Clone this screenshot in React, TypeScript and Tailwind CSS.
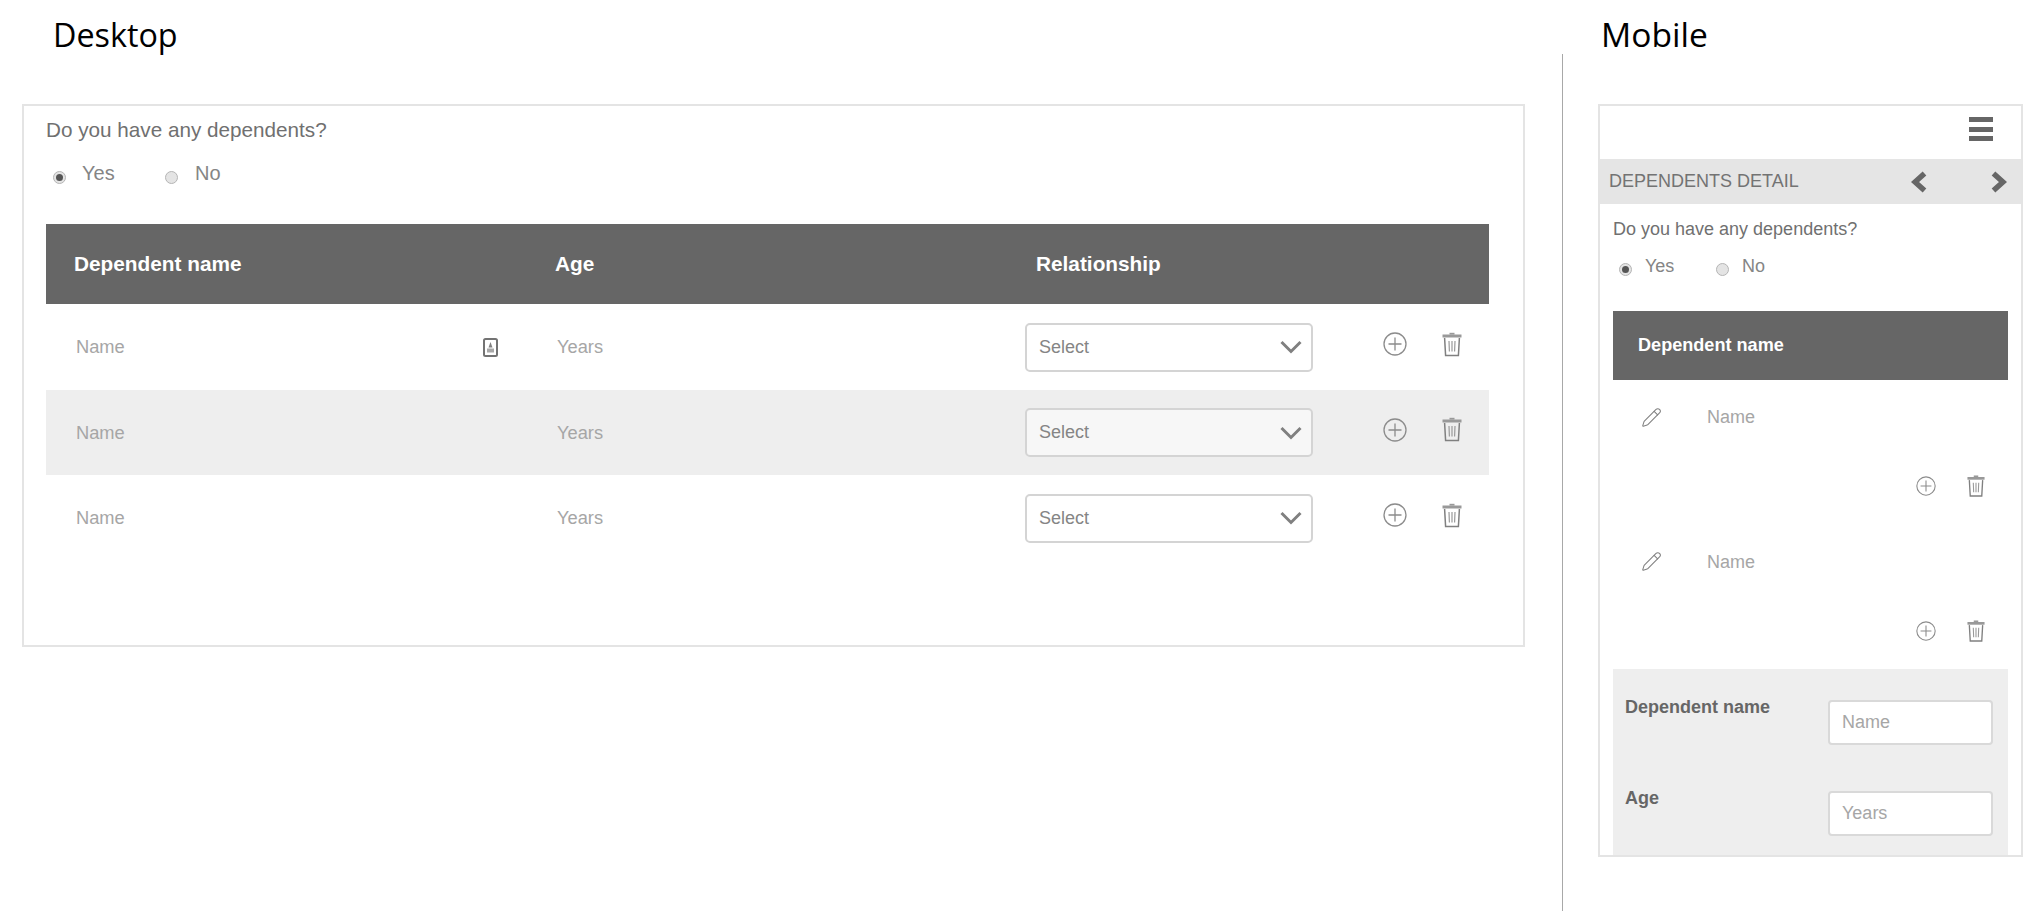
import { Pencil } from 'lucide-react'

const sans = "font-['Liberation_Sans',Arial,sans-serif]"

function PlusCircle({ size }: { size: number }) {
  return (
    <svg width={size} height={size} viewBox="0 0 24 24" fill="none" stroke="#8c8c8c" strokeWidth="1.3" className="shrink-0">
      <circle cx="12" cy="12" r="11" />
      <path d="M12 5.5v13M5.5 12h13" />
    </svg>
  )
}

function Trash({ width, height }: { width: number; height: number }) {
  return (
    <svg width={width} height={height} viewBox="0 0 20 24" fill="none" stroke="#808080" className="shrink-0">
      <path d="M0.5 3.5h19" strokeWidth="3" stroke="#999999" />
      <path d="M7.5 1.2h5" strokeWidth="1.8" stroke="#999999" />
      <path d="M2.6 5.5l1 17.6h12.8l1-17.6" strokeWidth="1.5" />
      <path d="M7 8.5l.4 10.5M10 8.5V19M13 8.5L12.6 19" strokeWidth="1.2" stroke="#999999" />
    </svg>
  )
}

function Chevron({ dir }: { dir: 'left' | 'right' }) {
  return (
    <svg width="16" height="22" viewBox="0 0 16 22" fill="none" stroke="#666666" strokeWidth="5.5">
      <path d={dir === 'left' ? 'M13.5 2.5L4 11l9.5 8.5' : 'M2.5 2.5L12 11l-9.5 8.5'} />
    </svg>
  )
}

function ContactIcon() {
  return (
    <svg width="15" height="19" viewBox="0 0 15 19" fill="none" className="shrink-0">
      <rect x="1" y="1" width="13" height="17" rx="1.5" stroke="#737373" strokeWidth="2" />
      <path d="M7.5 4l2 5.5h-4z" fill="#808080" />
      <rect x="4" y="10.5" width="7" height="4" fill="#a8a8a8" />
    </svg>
  )
}

function Radio({ checked }: { checked?: boolean }) {
  return (
    <span className="flex h-[13px] w-[13px] items-center justify-center rounded-full border border-[#b5b5b5] bg-[#e4e4e4]">
      {checked && <span className="h-[7px] w-[7px] rounded-full bg-[#555555]" />}
    </span>
  )
}

const rows = [
  { height: 'h-[86px]', bg: 'bg-white', select: 'bg-white', icon: true },
  { height: 'h-[85px]', bg: 'bg-[#eeeeee]', select: 'bg-[#f7f7f7]', icon: false },
  { height: 'h-[86px]', bg: 'bg-white', select: 'bg-white', icon: false },
]

function DesktopPanel() {
  return (
    <div className="h-[543px] w-[1503px] border-2 border-[#e4e4e4] pl-[22px] pr-[34px]">
      <p className="pt-[10px] text-[20.7px] leading-[28px] text-[#707070]">Do you have any dependents?</p>
      <div className="mt-[17px] flex h-[30px] items-start text-[20px] leading-[24px] text-[#858585]">
        <span className="ml-[7px] mt-[10px]"><Radio checked /></span>
        <span className="ml-[16px] w-[83px]">Yes</span>
        <span className="mt-[10px]"><Radio /></span>
        <span className="ml-[17px]">No</span>
      </div>
      <div className="mt-[33px] grid h-[80px] grid-cols-3 items-center bg-[#666666] text-[20.8px] font-bold text-white">
        <span className="pl-[28px]">Dependent name</span>
        <span className="pl-[28px]">Age</span>
        <span className="pl-[28px]">Relationship</span>
      </div>
      {rows.map((row, i) => (
        <div key={i} className={`grid grid-cols-3 items-center text-[18.3px] ${row.height} ${row.bg}`}>
          <div className="flex items-center justify-between pl-[30px] pr-[29px] text-[#a6a6a6]">
            <span>Name</span>
            {row.icon && <ContactIcon />}
          </div>
          <div className="pl-[30px] text-[#a6a6a6]">Years</div>
          <div className="flex items-center pl-[17px]">
            <div className={`flex h-[49px] w-[288px] items-center justify-between rounded-[5px] border-2 border-[#d4d4d4] pl-[12px] pr-[9px] text-[18px] text-[#858585] ${row.select}`}>
              <span>Select</span>
              <svg width="22" height="14" viewBox="0 0 22 14" fill="none" stroke="#808080" strokeWidth="3">
                <path d="M1.5 2l9.5 9.5L20.5 2" />
              </svg>
            </div>
            <div className="mb-[6px] ml-[70px] flex items-center gap-[35px]">
              <PlusCircle size={24} />
              <Trash width={20} height={25} />
            </div>
          </div>
        </div>
      ))}
    </div>
  )
}

function MobileRow() {
  return (
    <div className="h-[144.5px]">
      <div className="flex items-center pl-[28px] pt-[25px] text-[18px] leading-[24px] text-[#a6a6a6]">
        <Pencil size={21} strokeWidth={1.2} color="#808080" className="shrink-0" />
        <span className="ml-[45px]">Name</span>
      </div>
      <div className="mt-[46px] flex items-center pl-[303px]">
        <PlusCircle size={20} />
        <span className="ml-[31px]"><Trash width={18} height={22} /></span>
      </div>
    </div>
  )
}

function MobileField({ label, placeholder }: { label: string; placeholder: string }) {
  return (
    <div className="flex h-[91px] justify-between pl-[12px] pr-[15px]">
      <span className="text-[18px] font-bold leading-[24px] text-[#666666]">{label}</span>
      <div className="mt-[5px] flex h-[45px] w-[165px] items-center rounded-[4px] border-2 border-[#d9d9d9] bg-white pl-[12px] text-[18px] text-[#a6a6a6]">
        {placeholder}
      </div>
    </div>
  )
}

function MobilePanel() {
  return (
    <div className="h-[753px] w-[425px] overflow-hidden border-2 border-[#e4e4e4]">
      <div className="flex h-[53px] justify-end pr-[28px] pt-[11px]">
        <div className="flex h-[24px] w-[24px] flex-col justify-between">
          <span className="h-[5px] bg-[#666666]" />
          <span className="h-[5px] bg-[#666666]" />
          <span className="h-[5px] bg-[#666666]" />
        </div>
      </div>
      <div className="flex h-[45px] items-center bg-[#e5e5e5] pl-[9px] text-[18px] text-[#737373]">
        <span className="w-[302px]">DEPENDENTS DETAIL</span>
        <Chevron dir="left" />
        <span className="ml-[64px]"><Chevron dir="right" /></span>
      </div>
      <div className="pl-[13px] pr-[13px]">
        <p className="pt-[12px] text-[18px] leading-[26px] text-[#707070]">Do you have any dependents?</p>
        <div className="mt-[12px] flex h-[24px] items-start text-[18px] leading-[24px] text-[#858585]">
          <span className="ml-[6px] mt-[9px]"><Radio checked /></span>
          <span className="ml-[13px] w-[71px]">Yes</span>
          <span className="mt-[9px]"><Radio /></span>
          <span className="ml-[13px]">No</span>
        </div>
        <div className="mt-[33px] flex h-[69px] items-center bg-[#666666] pl-[25px] text-[18.1px] font-bold text-white">
          Dependent name
        </div>
        <MobileRow />
        <MobileRow />
        <div className="bg-[#eeeeee] pb-[20px] pt-[26px]">
          <MobileField label="Dependent name" placeholder="Name" />
          <MobileField label="Age" placeholder="Years" />
        </div>
      </div>
    </div>
  )
}

export default function App() {
  return (
    <div className={`flex h-[911px] w-[2043px] overflow-hidden bg-white ${sans}`}>
      <div className="w-[1562px] shrink-0 pl-[22px]">
        <h1 className="h-[104px] pl-[31px] pt-[11px] font-['Open_Sans',sans-serif] text-[32.3px] leading-[46px] text-black">Desktop</h1>
        <DesktopPanel />
      </div>
      <div className="mt-[54px] w-px shrink-0 bg-[#a8a8a8]" />
      <div className="pl-[35px]">
        <h1 className="h-[104px] pl-[3px] pt-[11px] font-['Open_Sans',sans-serif] text-[33.6px] leading-[46px] text-black">Mobile</h1>
        <MobilePanel />
      </div>
    </div>
  )
}
